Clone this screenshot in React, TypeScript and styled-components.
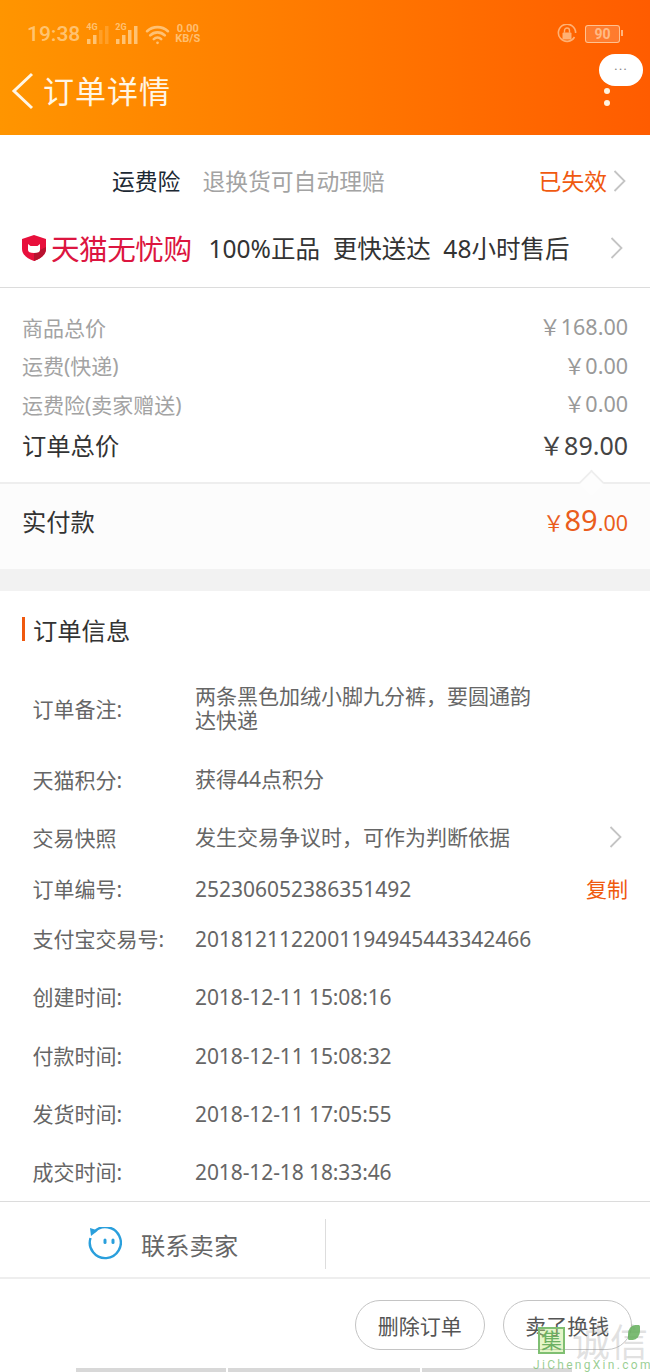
import React from 'react';
import styled, { createGlobalStyle } from 'styled-components';
import { Wifi } from 'lucide-react';

const GlobalStyle = createGlobalStyle`
  html, body {
    margin: 0;
    padding: 0;
    background: #ffffff;
    font-family: "Noto Sans", "Noto Sans CJK SC", sans-serif;
  }
`;

const Page = styled.div`
  position: relative;
  width: 650px;
  height: 1372px;
  overflow: hidden;
  background: #ffffff;
`;

const Header = styled.header`
  height: 135px;
  position: relative;
  background: linear-gradient(90deg, #ff9500 0%, #ff7c00 45%, #ff5c00 100%);
`;

const StatusBar = styled.div`
  height: 62px;
  box-sizing: border-box;
  padding: 6px 30px 0 27px;
  display: flex;
  align-items: center;
  color: rgba(255, 240, 210, 0.55);
`;

const Clock = styled.span`
  font-family: Roboto, sans-serif;
  font-size: 21px;
  font-weight: 500;
  margin-right: 5px;
`;

const SignalWrap = styled.span`
  position: relative;
  width: 28px;
  height: 20px;
  margin-right: 1px;
`;

const SignalLabel = styled.span`
  position: absolute;
  left: 1px;
  top: -1px;
  font-family: Roboto, sans-serif;
  font-size: 9px;
  font-weight: 700;
  line-height: 9px;
`;

const Speed = styled.span`
  font-family: Roboto, sans-serif;
  font-size: 11px;
  font-weight: 700;
  line-height: 10px;
  margin-left: 5px;
  text-align: center;
`;

const Spacer = styled.span`
  flex: 1;
`;

const Battery = styled.span`
  position: relative;
  display: flex;
  align-items: center;
  justify-content: center;
  width: 33px;
  height: 16px;
  margin-left: 8px;
  border: 1px solid rgba(255, 240, 210, 0.6);
  border-radius: 3px;
  background: rgba(255, 255, 255, 0.18);
  font-family: Roboto, sans-serif;
  font-size: 14px;
  font-weight: 700;

  &::after {
    content: '';
    position: absolute;
    right: -4px;
    top: 4px;
    width: 2px;
    height: 6px;
    background: rgba(255, 240, 210, 0.6);
  }
`;

const NavBar = styled.div`
  display: flex;
  align-items: center;
  height: 58px;
  padding-left: 11px;
`;

const NavTitle = styled.h1`
  margin: 0 0 0 8px;
  color: #fff6e6;
  font-size: 31px;
  font-weight: 400;
  letter-spacing: 1px;
  line-height: 42px;
`;

const Bubble = styled.div`
  position: absolute;
  left: 599px;
  top: 54px;
  width: 44px;
  height: 32px;
  border-radius: 16px;
  background: #ffffff;
  color: #888888;
  font-family: Roboto, sans-serif;
  font-size: 14px;
  letter-spacing: 1px;
  line-height: 32px;
  text-align: center;
`;

const Dot = styled.span<{ $top: number }>`
  position: absolute;
  left: 604px;
  top: ${(p) => p.$top}px;
  width: 6px;
  height: 6px;
  border-radius: 50%;
  background: #fff3e0;
`;

const InsuranceRow = styled.div`
  height: 90px;
  box-sizing: border-box;
  padding: 1px 24px 0 112px;
  display: flex;
  align-items: center;
  font-size: 22.8px;
`;

const InsuranceName = styled.span`
  color: #1c2833;
  margin-right: 22px;
`;

const InsuranceDesc = styled.span`
  color: #a3a3a3;
  flex: 1;
`;

const Expired = styled.span`
  color: #f0590f;
  margin-right: 6px;
`;

const TmallRow = styled.div`
  height: 63px;
  box-sizing: border-box;
  padding: 0 24px 17px 21px;
  display: flex;
  align-items: center;
  border-bottom: 1px solid #dcdcdc;
`;

const TmallName = styled.span`
  color: #dc1640;
  font-size: 28.6px;
  letter-spacing: -0.5px;
  margin-left: 4px;
  margin-right: 17px;
  white-space: nowrap;
`;

const TmallPromise = styled.span`
  flex: 1;
  color: #333333;
  font-size: 24.5px;
  white-space: pre;
`;

const PriceList = styled.section`
  padding: 19.5px 22px 0;
  height: 194px;
  box-sizing: border-box;
`;

const PriceRow = styled.div<{ $total?: boolean }>`
  display: flex;
  justify-content: space-between;
  align-items: center;
  height: ${(p) => (p.$total ? 42 : 38.5)}px;
  font-size: ${(p) => (p.$total ? 24.3 : 21)}px;
  color: ${(p) => (p.$total ? '#333333' : '#a3a3a3')};
`;

const Amount = styled.span<{ $total?: boolean }>`
  margin-bottom: ${(p) => (p.$total ? 0 : 2)}px;
  font-size: ${(p) => (p.$total ? 25 : 21.5)}px;
  color: ${(p) => (p.$total ? '#444444' : '#999999')};
`;

const PaidRow = styled.section`
  position: relative;
  height: 87px;
  box-sizing: border-box;
  padding: 0 22px 12px;
  display: flex;
  justify-content: space-between;
  align-items: center;
  background: #fcfcfc;
  border-top: 2px solid #eeeeee;
  font-size: 24.3px;
  color: #333333;

  &::before {
    content: '';
    position: absolute;
    right: 49px;
    top: -11px;
    width: 17px;
    height: 17px;
    background: #fdfdfd;
    border-left: 2px solid #eeeeee;
    border-top: 2px solid #eeeeee;
    transform: rotate(45deg) scale(0.95);
  }
`;

const PaidAmount = styled.span`
  margin-bottom: 2px;
  color: #ea5d1c;
  font-size: 21.5px;
`;

const PaidBig = styled.span`
  font-size: 29px;
`;

const Gap = styled.div`
  height: 22px;
  background: #f2f2f2;
`;

const InfoSection = styled.section`
  height: 611px;
  box-sizing: border-box;
  padding: 18px 22px 0;
  border-bottom: 1px solid #dcdcdc;
`;

const SectionTitle = styled.h2`
  margin: 0 0 16px;
  height: 40px;
  display: flex;
  align-items: center;
  font-size: 24.3px;
  font-weight: 400;
  color: #333333;

  &::before {
    content: '';
    width: 3px;
    height: 24px;
    margin-right: 8px;
    background: #f0590f;
  }
`;

const InfoRow = styled.div<{ $height: number }>`
  display: flex;
  align-items: center;
  height: ${(p) => p.$height}px;
  padding-left: 10.5px;
  font-size: 21px;
  color: #666666;
`;

const InfoLabel = styled.span`
  width: 162.5px;
  flex: none;
`;

const InfoValue = styled.span<{ $wide?: boolean }>`
  flex: 1;
  line-height: 24px;
  padding-right: ${(p) => (p.$wide ? 0 : 72)}px;
  white-space: pre-line;
`;

const NumberValue = styled(InfoValue)`
  padding-top: 2px;
`;

const TimeValue = styled(NumberValue)`
  letter-spacing: -0.1px;
`;

const Copy = styled.span`
  color: #f0590f;
`;

const ChevronIcon = styled.svg<{ $inset?: number }>`
  flex: none;
  margin-right: ${(p) => p.$inset ?? 0}px;
`;

const ContactBar = styled.div`
  height: 77px;
  box-sizing: border-box;
  padding-top: 9px;
  border-bottom: 2px solid #eeeeee;
  display: flex;
  align-items: center;
`;

const ContactCell = styled.div`
  width: 326px;
  height: 50px;
  box-sizing: border-box;
  padding-left: 88px;
  display: flex;
  align-items: center;
  gap: 19px;
  border-right: 1px solid #dddddd;
  font-size: 24.3px;
  color: #666666;
`;

const ActionBar = styled.div`
  display: flex;
  justify-content: flex-end;
  gap: 18px;
  padding: 21px 18px 0 0;
`;

const ActionButton = styled.button`
  width: 129.5px;
  height: 50px;
  padding: 0;
  border: 1px solid #c4c4c4;
  border-radius: 25px;
  background: #ffffff;
  color: #555555;
  font-family: inherit;
  font-size: 21px;
`;

const NavHint = styled.div`
  position: absolute;
  left: 76px;
  bottom: 0;
  height: 4px;
  display: flex;
  gap: 2px;
`;

const NavHintBar = styled.span<{ $width: number }>`
  width: ${(p) => p.$width}px;
  background: #d8d8d8;
`;

const Watermark = styled.div`
  position: absolute;
  left: 533px;
  top: 1322px;
  width: 117px;
  height: 50px;
  pointer-events: none;
`;

const MarkBox = styled.span`
  position: absolute;
  left: 5px;
  top: 5px;
  width: 27px;
  height: 27px;
  box-sizing: border-box;
  border: 2px solid #7fbf72;
  background: rgba(190, 230, 120, 0.4);
  color: #6db062;
  font-size: 21px;
  line-height: 22px;
  text-align: center;
`;

const MarkName = styled.span`
  position: absolute;
  left: 39px;
  top: 0;
  color: rgba(150, 150, 150, 0.28);
  font-size: 38px;
  line-height: 38px;
  white-space: nowrap;
`;

const MarkLeaf = styled.span`
  position: absolute;
  left: 95px;
  top: 3px;
  width: 12px;
  height: 15px;
  border-radius: 60% 10% 60% 10%;
  background: rgba(100, 175, 90, 0.85);
`;

const MarkUrl = styled.span`
  position: absolute;
  left: 0;
  top: 37px;
  color: rgba(120, 190, 110, 0.75);
  font-family: Roboto, sans-serif;
  font-size: 12px;
  line-height: 13px;
  letter-spacing: 2.3px;
  white-space: nowrap;
`;

const Signal = ({ label, bars }: { label: string; bars: number }) => (
  <SignalWrap>
    <SignalLabel>{label}</SignalLabel>
    <svg width="28" height="20" viewBox="0 0 28 20" fill="currentColor">
      {[5, 9, 14, 18].map((h, i) => (
        <rect key={h} x={2 + i * 6} y={20 - h} width="3.5" height={h} opacity={i < bars ? 1 : 0.35} />
      ))}
    </svg>
  </SignalWrap>
);

const Chevron = ({ inset }: { inset?: number }) => (
  <ChevronIcon $inset={inset} width="13" height="22" viewBox="0 0 13 22" fill="none" stroke="#c4c4c4" strokeWidth="1.8">
    <path d="M1.5 1 L11.5 11 L1.5 21" />
  </ChevronIcon>
);

const timeRows = [
  { label: '创建时间:', value: '2018-12-11 15:08:16' },
  { label: '付款时间:', value: '2018-12-11 15:08:32' },
  { label: '发货时间:', value: '2018-12-11 17:05:55' },
  { label: '成交时间:', value: '2018-12-18 18:33:46' },
];

const App: React.FC = () => (
  <Page>
    <GlobalStyle />
    <Header>
      <StatusBar>
        <Clock>19:38</Clock>
        <Signal label="4G" bars={2} />
        <Signal label="2G" bars={4} />
        <Wifi size={25} strokeWidth={2.6} style={{ marginLeft: 2 }} />
        <Speed>
          0.00
          <br />
          KB/S
        </Speed>
        <Spacer />
        <svg width="20" height="20" viewBox="0 0 20 20" fill="none">
          <path d="M17.5 13 A8.6 8.6 0 1 1 18.6 9" stroke="currentColor" strokeWidth="1.6" />
          <rect x="5.5" y="8.5" width="9" height="7" rx="1" fill="currentColor" />
          <path d="M7.5 8.5 V6.5 A2.5 2.5 0 0 1 12.5 6.5 V8.5" stroke="currentColor" strokeWidth="1.4" />
        </svg>
        <Battery>90</Battery>
      </StatusBar>
      <NavBar>
        <svg width="24" height="38" viewBox="0 0 24 38" fill="none" stroke="#fff6e6" strokeWidth="3">
          <path d="M21 2 L3 19 L21 36" />
        </svg>
        <NavTitle>订单详情</NavTitle>
      </NavBar>
      <Bubble>···</Bubble>
      <Dot $top={88} />
      <Dot $top={100} />
    </Header>

    <InsuranceRow>
      <InsuranceName>运费险</InsuranceName>
      <InsuranceDesc>退换货可自动理赔</InsuranceDesc>
      <Expired>已失效</Expired>
      <Chevron />
    </InsuranceRow>

    <TmallRow>
      <svg width="26" height="28" viewBox="0 0 26 28">
        <path d="M13 1 L25 5 V15 C25 21 19 25 13 27 C7 25 1 21 1 15 V5 Z" fill="#e8103c" />
        <path d="M25 13 V15 C25 21 19 25 13 27 V19 Z" fill="#b8122f" />
        <path d="M7 10 L9.5 12 H16.5 L19 10 V16 C19 18 17 19 13 19 C9 19 7 18 7 16 Z" fill="#ffffff" />
      </svg>
      <TmallName>天猫无忧购</TmallName>
      <TmallPromise>100%正品  更快送达  48小时售后</TmallPromise>
      <Chevron inset={3} />
    </TmallRow>

    <PriceList>
      <PriceRow>
        <span>商品总价</span>
        <Amount>￥168.00</Amount>
      </PriceRow>
      <PriceRow>
        <span>运费(快递)</span>
        <Amount>￥0.00</Amount>
      </PriceRow>
      <PriceRow>
        <span>运费险(卖家赠送)</span>
        <Amount>￥0.00</Amount>
      </PriceRow>
      <PriceRow $total>
        <span>订单总价</span>
        <Amount $total>￥89.00</Amount>
      </PriceRow>
    </PriceList>

    <PaidRow>
      <span>实付款</span>
      <PaidAmount>
        ￥<PaidBig>89</PaidBig>.00
      </PaidAmount>
    </PaidRow>

    <Gap />

    <InfoSection>
      <SectionTitle>订单信息</SectionTitle>
      <InfoRow $height={86}>
        <InfoLabel>订单备注:</InfoLabel>
        <InfoValue>{'两条黑色加绒小脚九分裤，要圆通韵\n达快递'}</InfoValue>
      </InfoRow>
      <InfoRow $height={56}>
        <InfoLabel>天猫积分:</InfoLabel>
        <InfoValue>获得44点积分</InfoValue>
      </InfoRow>
      <InfoRow $height={60}>
        <InfoLabel>交易快照</InfoLabel>
        <InfoValue $wide>发生交易争议时，可作为判断依据</InfoValue>
        <Chevron inset={6} />
      </InfoRow>
      <InfoRow $height={42}>
        <InfoLabel>订单编号:</InfoLabel>
        <NumberValue $wide>252306052386351492</NumberValue>
        <Copy>复制</Copy>
      </InfoRow>
      <InfoRow $height={58}>
        <InfoLabel>支付宝交易号:</InfoLabel>
        <NumberValue $wide>2018121122001194945443342466</NumberValue>
      </InfoRow>
      {timeRows.map((row) => (
        <InfoRow key={row.label} $height={58.4}>
          <InfoLabel>{row.label}</InfoLabel>
          <TimeValue $wide>{row.value}</TimeValue>
        </InfoRow>
      ))}
    </InfoSection>

    <ContactBar>
      <ContactCell>
        <svg width="34" height="34" viewBox="0 0 34 34" fill="none">
          <path d="M6 5 A15.5 15.5 0 1 1 2.5 11" stroke="#2a9fdc" strokeWidth="2.4" />
          <path d="M2 1 L10 3.5 L3 9 Z" fill="#2a9fdc" />
          <rect x="15.5" y="11.5" width="3" height="5.5" rx="1.5" fill="#2a9fdc" />
          <rect x="23.5" y="11.5" width="3" height="5.5" rx="1.5" fill="#2a9fdc" />
        </svg>
        联系卖家
      </ContactCell>
    </ContactBar>

    <ActionBar>
      <ActionButton>删除订单</ActionButton>
      <ActionButton>卖了换钱</ActionButton>
    </ActionBar>

    <NavHint>
      <NavHintBar $width={150} />
      <NavHintBar $width={192} />
      <NavHintBar $width={150} />
    </NavHint>

    <Watermark>
      <MarkBox>集</MarkBox>
      <MarkName>诚信</MarkName>
      <MarkLeaf />
      <MarkUrl>JiChengXin.com</MarkUrl>
    </Watermark>
  </Page>
);

export default App;
